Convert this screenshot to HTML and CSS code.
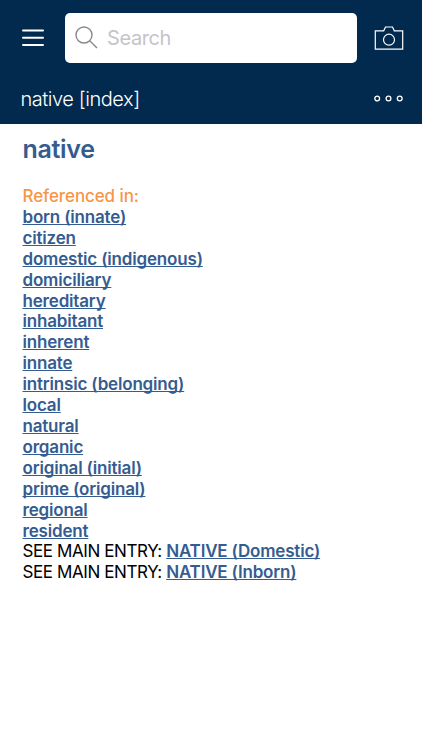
FILE: index.html
```html
<!DOCTYPE html>
<html lang="en">
<head>
  <meta charset="UTF-8">
  <meta name="viewport" content="width=device-width, initial-scale=1.0">
  <title>native [index]</title>
  <link rel="stylesheet" href="styles.css">
</head>
<body>
  <header class="header">
    <div class="toolbar">
      <button class="icon-button menu" aria-label="Menu">
        <svg width="22" height="18" viewBox="0 0 22 18" fill="none" stroke="#fff" stroke-width="2" stroke-linecap="round">
          <path d="M1 1.5h20M1 8.7h20M1 16h20"/>
        </svg>
      </button>
      <label class="search">
        <svg width="24" height="24" viewBox="0 0 24 24" fill="none" stroke="#8a8a8e" stroke-width="1.4">
          <circle cx="9" cy="9" r="8"/>
          <path d="M14.7 14.7L22 22"/>
        </svg>
        <input type="text" placeholder="Search">
      </label>
      <button class="icon-button camera" aria-label="Camera">
        <svg width="30" height="24" viewBox="0 0 30 24" fill="none" stroke="#fff" stroke-width="1.2">
          <path d="M1.3 4.8h8.4L11.5 1h7l1.8 3.8h8.4v18.3H1.3z"/>
          <circle cx="15" cy="13.7" r="5.5"/>
        </svg>
      </button>
    </div>
    <div class="title-bar">
      <span class="title">native [index]</span>
      <button class="icon-button more" aria-label="More">
        <svg width="30" height="8" viewBox="0 0 30 8" fill="none" stroke="#fff" stroke-width="1.3">
          <circle cx="3.2" cy="3.5" r="2.4"/>
          <circle cx="14.5" cy="3.5" r="2.4"/>
          <circle cx="25.7" cy="3.5" r="2.4"/>
        </svg>
      </button>
    </div>
  </header>

  <main class="entry">
    <h1 class="headword">native</h1>
    <div class="label">Referenced in:</div>
    <ul class="references">
      <li><a href="#">born (innate)</a></li>
      <li><a href="#">citizen</a></li>
      <li><a href="#">domestic (indigenous)</a></li>
      <li><a href="#">domiciliary</a></li>
      <li><a href="#">hereditary</a></li>
      <li><a href="#">inhabitant</a></li>
      <li><a href="#">inherent</a></li>
      <li><a href="#">innate</a></li>
      <li><a href="#">intrinsic (belonging)</a></li>
      <li><a href="#">local</a></li>
      <li><a href="#">natural</a></li>
      <li><a href="#">organic</a></li>
      <li><a href="#">original (initial)</a></li>
      <li><a href="#">prime (original)</a></li>
      <li><a href="#">regional</a></li>
      <li><a href="#">resident</a></li>
      <li class="see">SEE MAIN ENTRY: <a href="#">NATIVE (Domestic)</a></li>
      <li class="see">SEE MAIN ENTRY: <a href="#">NATIVE (Inborn)</a></li>
    </ul>
  </main>
</body>
</html>
```

FILE: styles.css
```css
* {
  box-sizing: border-box;
}

body {
  margin: 0;
  background: #fff;
  font-family: Inter, "Liberation Sans", sans-serif;
  color: #000;
}

.header {
  height: 124px;
  background: #012a4e;
  color: #fff;
}

.toolbar {
  display: flex;
  align-items: center;
  height: 75px;
  padding: 0 18px 0 22px;
}

.icon-button {
  display: flex;
  padding: 0;
  border: none;
  background: none;
}

.search {
  display: flex;
  align-items: center;
  width: 292px;
  height: 50px;
  margin: 0 17px 0 21px;
  padding-left: 10px;
  background: #fff;
  border-radius: 5px;
}

.search input {
  width: 240px;
  margin-left: 8px;
  padding: 0;
  border: none;
  outline: none;
  font: 20px Inter, "Liberation Sans", sans-serif;
  letter-spacing: -0.4px;
}

.search input::placeholder {
  color: #c4c4c9;
}

.title-bar {
  display: flex;
  align-items: center;
  justify-content: space-between;
  height: 47px;
  padding: 0 18px 0 20.5px;
}

.title {
  font-size: 20px;
  font-weight: 300;
  letter-spacing: -0.45px;
}

.entry {
  padding: 9px 22.5px;
}

.headword {
  margin: 0 0 21px;
  font-size: 25px;
  line-height: 32px;
  font-weight: 600;
  letter-spacing: -0.3px;
  color: #355c91;
}

.label,
.references {
  font-size: 17px;
  line-height: 20.9px;
}

.label {
  font-weight: 500;
  letter-spacing: -0.1px;
  color: #f79646;
}

.references {
  margin: 0;
  padding: 0;
  list-style: none;
}

.references a {
  font-weight: 600;
  letter-spacing: -0.18px;
  color: #355c91;
  text-decoration-thickness: 1px;
  text-decoration-skip-ink: none;
  text-underline-offset: 1px;
}

.see {
  letter-spacing: -0.4px;
}
```
